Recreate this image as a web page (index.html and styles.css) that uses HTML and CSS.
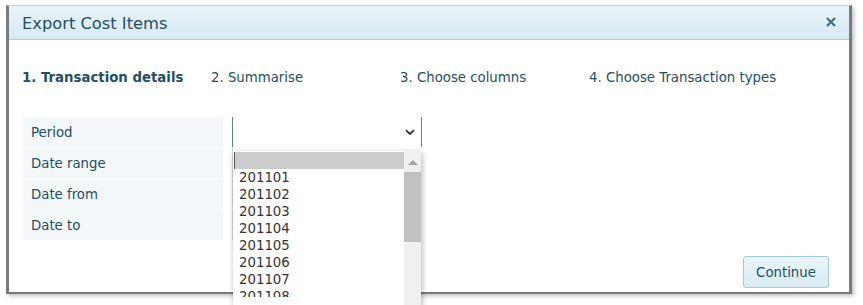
FILE: index.html
```html
<!DOCTYPE html>
<html lang="en">
<head>
    <meta charset="UTF-8">
    <meta name="viewport" content="width=device-width, initial-scale=1.0">
    <title>Export Cost Items</title>
    <link rel="stylesheet" href="styles.css">
</head>
<body>
    <div class="dialog">
        <div class="dialog-header">
            <span class="dialog-title">Export Cost Items</span>
            <svg class="dialog-close" width="10" height="10" viewBox="0 0 10 10">
                <path d="M1 1 L9 9 M9 1 L1 9" stroke="#3f6e83" stroke-width="2.2" fill="none"/>
            </svg>
        </div>
        <div class="dialog-body">
            <div class="steps">
                <div class="step active">1. Transaction details</div>
                <div class="step">2. Summarise</div>
                <div class="step">3. Choose columns</div>
                <div class="step">4. Choose Transaction types</div>
            </div>

            <div class="form">
                <div class="row">
                    <div class="label">Period</div>
                    <div class="field select-field">
                        <div class="select">
                            <svg class="chevron" width="10" height="7" viewBox="0 0 10 7">
                                <path d="M1 1.2 L5 5 L9 1.2" fill="none" stroke="#333" stroke-width="1.8"/>
                            </svg>
                        </div>
                        <div class="dropdown">
                            <ul class="options">
                                <li class="option selected">&nbsp;</li>
                                <li class="option">201101</li>
                                <li class="option">201102</li>
                                <li class="option">201103</li>
                                <li class="option">201104</li>
                                <li class="option">201105</li>
                                <li class="option">201106</li>
                                <li class="option">201107</li>
                                <li class="option">201108</li>
                            </ul>
                            <div class="scrollbar">
                                <span class="scroll-up"></span>
                                <span class="scroll-thumb"></span>
                            </div>
                        </div>
                    </div>
                </div>
                <div class="row">
                    <div class="label">Date range</div>
                    <div class="field"><div class="input"></div></div>
                </div>
                <div class="row">
                    <div class="label">Date from</div>
                    <div class="field"><div class="input"></div></div>
                </div>
                <div class="row">
                    <div class="label">Date to</div>
                    <div class="field"><div class="input"></div></div>
                </div>
            </div>

            <div class="footer">
                <button class="button">Continue</button>
            </div>
        </div>
    </div>
</body>
</html>
```

FILE: styles.css
```css
body {
    font-family: "DejaVu Sans", Verdana, sans-serif;
    margin: 0;
    background: #fff;
    color: #1f4e66;
    overflow: hidden;
    height: 305px;
}

.dialog {
    position: relative;
    margin: 5px 0 0 6px;
    width: 840px;
    background: #fff;
    border-top: 1px solid #d0d0d0;
    border-left: 3px solid #7a7a7a;
    border-right: 3px solid #7a7a7a;
    border-bottom: 2px solid #7a7a7a;
    box-shadow: 2px 2px 4px rgba(0, 0, 0, 0.25);
}

.dialog-header {
    display: flex;
    justify-content: space-between;
    align-items: center;
    height: 33px;
    padding: 0 13px 0 13px;
    background: linear-gradient(#e7f2f8, #d8eaf3);
    border-bottom: 1px solid #a9d0e2;
}

.dialog-title {
    font-size: 16.3px;
    color: #1f4e66;
    margin-top: 2px;
}

.dialog-close {
    margin-top: -1px;
}

.dialog-body {
    padding: 0 20px 4px 13px;
}

.steps {
    display: grid;
    grid-template-columns: repeat(4, 189px);
    padding: 30px 0 0;
    height: 48px;
    box-sizing: border-box;
    font-size: 13.3px;
}

.step.active {
    font-weight: bold;
}

.form {
    display: flex;
    flex-direction: column;
    gap: 1px;
    margin-top: 29px;
}

.row {
    display: flex;
    height: 30px;
}

.label {
    width: 192px;
    padding: 2px 0 0 8px;
    margin-left: 1px;
    background: #f2f8fa;
    font-size: 13.3px;
    line-height: 28px;
}

.field {
    position: relative;
    margin-left: 9px;
    width: 190px;
}

.select {
    height: 30px;
    border-left: 1px solid #5a7ea0;
    border-right: 1px solid #5a7ea0;
    display: flex;
    justify-content: flex-end;
    align-items: center;
    padding-right: 6px;
    box-sizing: border-box;
}

.input {
    height: 30px;
    border-left: 1px solid #c9d9e3;
}

.dropdown {
    position: absolute;
    z-index: 2;
    top: 34px;
    left: 1px;
    width: 188px;
    height: 156px;
    display: flex;
    background: #fff;
    box-shadow: 1px 2px 6px rgba(0, 0, 0, 0.3);
}

.options {
    list-style: none;
    margin: 0;
    padding: 1px 0 0 1px;
    flex: 1;
    height: 145px;
    overflow: hidden;
}

.option {
    height: 17px;
    line-height: 17px;
    font-size: 13.3px;
    color: #333;
    padding-left: 5px;
}

.option.selected {
    background: #cccccc;
    border-left: 1px solid #555;
    padding-left: 4px;
}

.scrollbar {
    width: 17px;
    background: #f0f0f0;
    display: flex;
    flex-direction: column;
    align-items: center;
}

.scroll-up {
    margin-top: 9px;
    width: 0;
    height: 0;
    border-left: 5px solid transparent;
    border-right: 5px solid transparent;
    border-bottom: 5px solid #a3a3a3;
}

.scroll-thumb {
    margin-top: 7px;
    width: 17px;
    height: 70px;
    background: #c1c1c1;
}

.footer {
    display: flex;
    justify-content: flex-end;
    margin-top: 16px;
}

.button {
    width: 86px;
    height: 32px;
    font-family: inherit;
    font-size: 13.3px;
    color: #1f4e66;
    background: linear-gradient(#e9f4f9, #d9ebf3);
    border: 1px solid #9fcbdd;
    border-radius: 3px;
    cursor: pointer;
}
```
